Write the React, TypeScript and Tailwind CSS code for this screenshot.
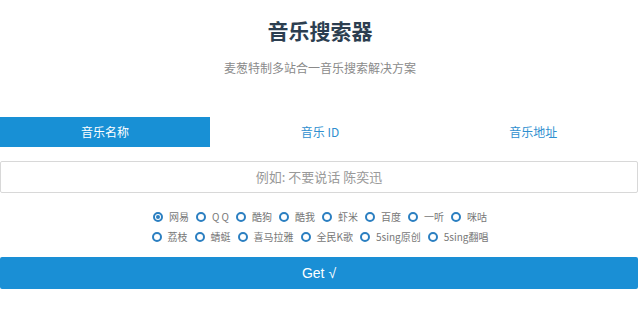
const sources1 = ['网易', 'Q Q', '酷狗', '酷我', '虾米', '百度', '一听', '咪咕'];
const sources2 = ['荔枝', '蜻蜓', '喜马拉雅', '全民K歌', '5sing原创', '5sing翻唱'];

function Radio({ label, checked }: { label: string; checked?: boolean }) {
  return (
    <label className="flex items-center gap-[6px]">
      <span className="w-[10px] h-[10px] rounded-full border-2 border-[#2b7fc1] flex items-center justify-center">
        {checked && <span className="w-[4px] h-[4px] rounded-full bg-[#2b7fc1]" />}
      </span>
      <span className="text-[10px] leading-[20px] text-[#777]">{label}</span>
    </label>
  );
}

export default function App() {
  return (
    <div
      className="w-[640px] h-[313px] bg-white flex flex-col"
      style={{ fontFamily: '"Noto Sans CJK SC", "Noto Sans", sans-serif' }}
    >
      {/* Header */}
      <h1 className="mt-[15px] text-center text-[21px] leading-[30px] font-bold text-[#2c3e50]">
        音乐搜索器
      </h1>
      <p className="mt-[13px] text-center text-[12px] leading-[20px] text-[#8a8a8a]">
        麦葱特制多站合一音乐搜索解决方案
      </p>

      {/* Tabs */}
      <div className="mt-[39px] grid grid-cols-3 h-[30px] w-[640px]">
        <div className="w-[210px] bg-[#1890d5] text-white text-[12px] flex items-center justify-center">
          音乐名称
        </div>
        <div className="text-[#2f8fcf] text-[12px] flex items-center justify-center">音乐 ID</div>
        <div className="text-[#2f8fcf] text-[12px] flex items-center justify-center">音乐地址</div>
      </div>

      {/* Input */}
      <div className="mt-[14px] w-[638px] h-[32px] border border-[#d8d8d8] rounded-[2px] flex items-center justify-center text-[13px] text-[#999]">
        例如: 不要说话 陈奕迅
      </div>

      {/* Sources */}
      <div className="mt-[14px] flex flex-col">
        <div className="flex justify-center gap-x-[7px]">
          {sources1.map((s, i) => (
            <Radio key={s} label={s} checked={i === 0} />
          ))}
        </div>
        <div className="flex justify-center gap-x-[7px]">
          {sources2.map(s => (
            <Radio key={s} label={s} />
          ))}
        </div>
      </div>

      {/* Submit */}
      <button
        className="mt-[10px] w-[638px] h-[32px] bg-[#1a8fd5] rounded-[2px] text-white text-[14px] flex items-center justify-center"
        style={{ fontFamily: '"Liberation Sans", sans-serif' }}
      >
        Get √
      </button>
    </div>
  );
}
